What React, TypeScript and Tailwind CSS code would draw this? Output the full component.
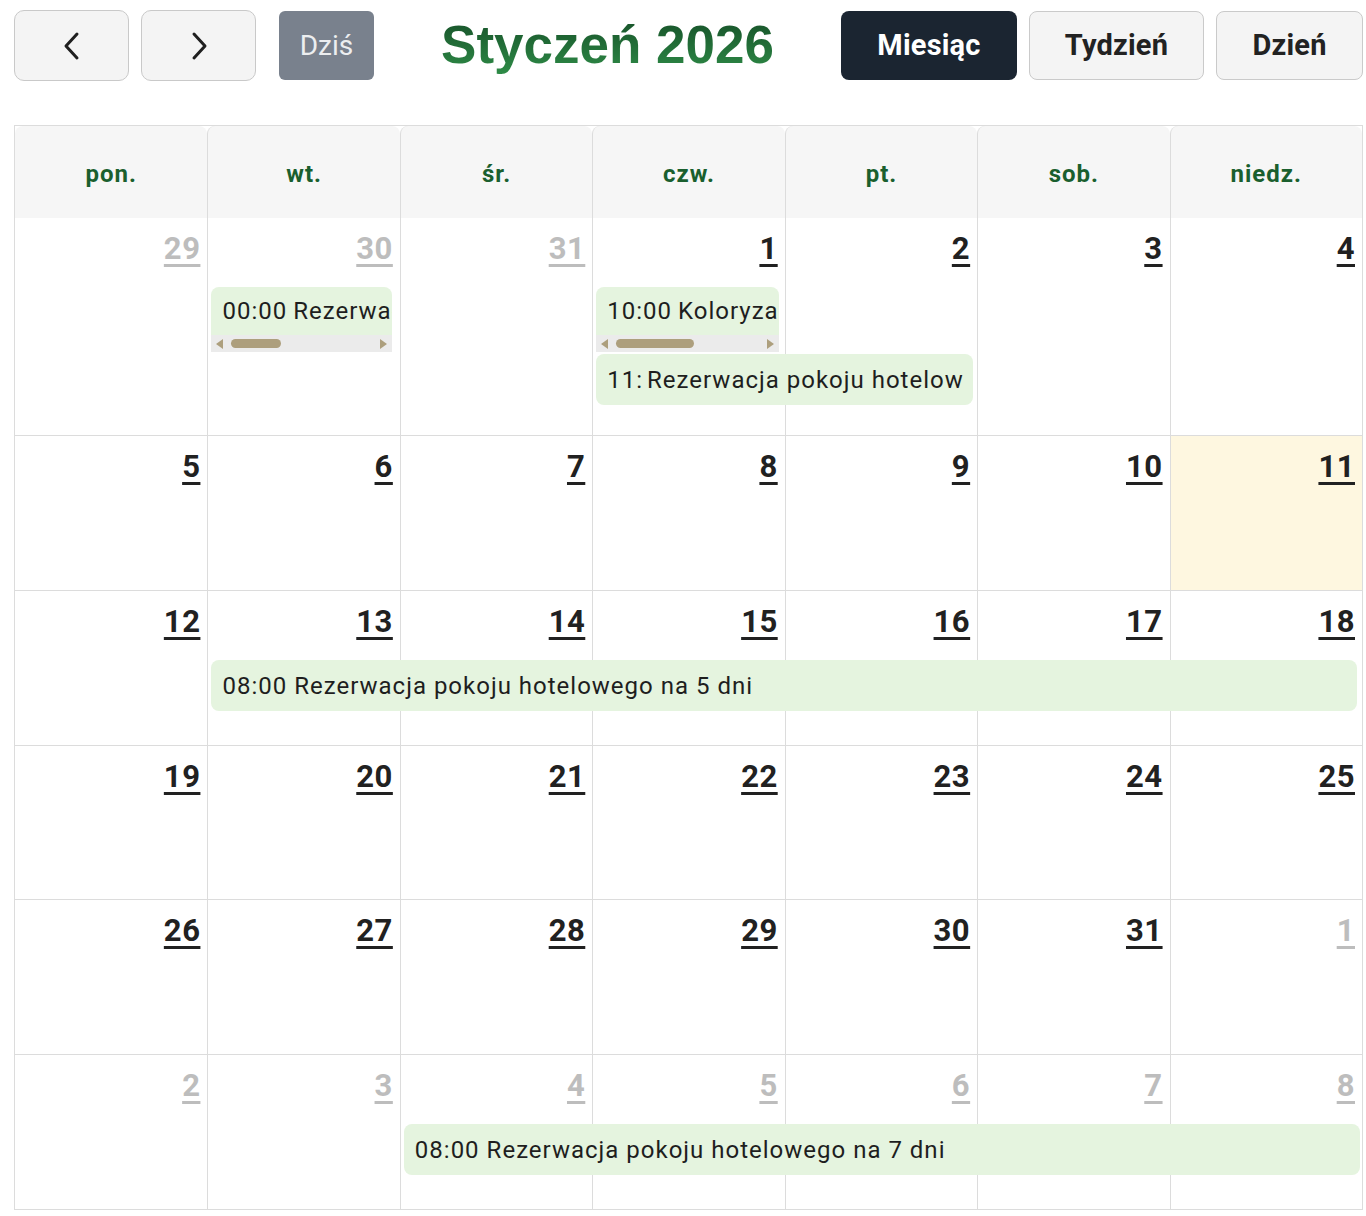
import React from 'react';

type Day = { n: number; muted?: boolean; today?: boolean };
type Ev = {
  col: number;
  span: number;
  row: number;
  time: string;
  title: string;
  mr: string;
  gap: string;
  scroll?: string;
};

const dayNames = ['pon.', 'wt.', 'śr.', 'czw.', 'pt.', 'sob.', 'niedz.'];

const weeks: { days: Day[]; events: Ev[]; h: string }[] = [
  {
    h: 'h-[218px]',
    days: [
      { n: 29, muted: true },
      { n: 30, muted: true },
      { n: 31, muted: true },
      { n: 1 },
      { n: 2 },
      { n: 3 },
      { n: 4 },
    ],
    events: [
      { col: 2, span: 1, row: 2, time: '00:00', title: 'Rezerwacja pokoju hotelowego', mr: 'mr-[8px]', gap: 'mr-[6px]', scroll: 'w-[50px]' },
      { col: 4, span: 1, row: 2, time: '10:00', title: 'Koloryzacja włosów', mr: 'mr-[6px]', gap: 'mr-[6px]', scroll: 'w-[78px]' },
      { col: 4, span: 2, row: 3, time: '11:', title: 'Rezerwacja pokoju hotelowego na 2 dni', mr: 'mr-[4px]', gap: 'mr-[4px]' },
    ],
  },
  {
    h: 'h-[155px]',
    days: [{ n: 5 }, { n: 6 }, { n: 7 }, { n: 8 }, { n: 9 }, { n: 10 }, { n: 11, today: true }],
    events: [],
  },
  {
    h: 'h-[155px]',
    days: [{ n: 12 }, { n: 13 }, { n: 14 }, { n: 15 }, { n: 16 }, { n: 17 }, { n: 18 }],
    events: [{ col: 2, span: 6, row: 2, time: '08:00', title: 'Rezerwacja pokoju hotelowego na 5 dni', mr: 'mr-[5px]', gap: 'mr-[7px]' }],
  },
  {
    h: 'h-[154px]',
    days: [{ n: 19 }, { n: 20 }, { n: 21 }, { n: 22 }, { n: 23 }, { n: 24 }, { n: 25 }],
    events: [],
  },
  {
    h: 'h-[155px]',
    days: [{ n: 26 }, { n: 27 }, { n: 28 }, { n: 29 }, { n: 30 }, { n: 31 }, { n: 1, muted: true }],
    events: [],
  },
  {
    h: 'h-[154px]',
    days: [
      { n: 2, muted: true },
      { n: 3, muted: true },
      { n: 4, muted: true },
      { n: 5, muted: true },
      { n: 6, muted: true },
      { n: 7, muted: true },
      { n: 8, muted: true },
    ],
    events: [{ col: 3, span: 5, row: 2, time: '08:00', title: 'Rezerwacja pokoju hotelowego na 7 dni', mr: 'mr-[2px]', gap: 'mr-[7px]' }],
  },
];

const colStart = ['', 'col-start-1', 'col-start-2', 'col-start-3', 'col-start-4', 'col-start-5', 'col-start-6', 'col-start-7'];
const colSpan = ['', 'col-span-1', 'col-span-2', 'col-span-3', 'col-span-4', 'col-span-5', 'col-span-6', 'col-span-7'];
const rowStart = ['', 'row-start-1', 'row-start-2', 'row-start-3'];

function Chevron({ dir }: { dir: 'left' | 'right' }) {
  return (
    <svg width="18" height="30" viewBox="0 0 18 30" fill="none">
      <path
        d={dir === 'left' ? 'M14 3 L3 15 L14 27' : 'M4 3 L15 15 L4 27'}
        stroke="#1f1f1f"
        strokeWidth="3"
        strokeLinecap="round"
        strokeLinejoin="round"
      />
    </svg>
  );
}

function FakeScrollbar({ thumb }: { thumb: string }) {
  return (
    <div className="flex h-[17px] items-center bg-[#ebebeb] px-[5px]">
      <span className="h-0 w-0 border-y-[5px] border-r-[7px] border-y-transparent border-r-[#ad9f7d]" />
      <span className={`ml-[8px] h-[9px] rounded-full bg-[#ad9f7d] ${thumb}`} />
      <span className="ml-auto h-0 w-0 border-y-[5px] border-l-[7px] border-y-transparent border-l-[#ad9f7d]" />
    </div>
  );
}

function Event({ ev }: { ev: Ev }) {
  return (
    <div
      className={`${colStart[ev.col]} ${colSpan[ev.span]} ${rowStart[ev.row]} ml-[4px] ${ev.mr} ${
        ev.row === 3 ? 'mt-[2px]' : ''
      } z-10 self-start overflow-hidden rounded-[8px] bg-[#e5f4df] ${ev.scroll ? 'rounded-b-none' : ''}`}
    >
      <div
        className={`flex items-center overflow-hidden whitespace-nowrap pl-[11px] text-[24px] tracking-[1px] text-[#1e1e1e] ${
          ev.scroll ? 'h-[48px]' : 'h-[51px] pr-[10px]'
        }`}
      >
        <span className={`shrink-0 ${ev.gap}`}>{ev.time}</span>
        <span className={ev.scroll ? 'shrink-0' : 'min-w-0 overflow-hidden'}>{ev.title}</span>
      </div>
      {ev.scroll && <FakeScrollbar thumb={ev.scroll} />}
    </div>
  );
}

export default function App() {
  return (
    <div className="min-h-[1216px] bg-white font-['Roboto','Liberation_Sans',sans-serif]">
      <div className="ml-[14px] w-[1349px] pt-[10px]">
        {/* toolbar */}
        <div className="flex h-[71px] items-center justify-between">
          <div className="flex items-center">
            <button className="flex h-[71px] w-[115px] items-center justify-center rounded-[10px] border border-[#c9c9c9] bg-[#f4f4f4]">
              <Chevron dir="left" />
            </button>
            <button className="ml-[12px] flex h-[71px] w-[115px] items-center justify-center rounded-[10px] border border-[#c9c9c9] bg-[#f4f4f4]">
              <Chevron dir="right" />
            </button>
            <button className="ml-[23px] flex h-[69px] w-[95px] items-center justify-center rounded-[6px] bg-[#79818d] text-[28px] text-[#eceef0]">
              Dziś
            </button>
          </div>
          <h2 className="-mt-[2px] bg-linear-to-b from-[#164f28] to-[#2f8d48] bg-clip-text font-['Liberation_Sans',Arial,sans-serif] text-[53px] font-bold leading-[60px] text-transparent">
            Styczeń 2026
          </h2>
          <div className="flex items-center gap-[12px]">
            <button className="h-[69px] w-[176px] rounded-[8px] bg-[#1b2531] text-[29px] font-bold tracking-[0.2px] text-white">
              Miesiąc
            </button>
            <button className="h-[69px] w-[175px] rounded-[8px] border border-[#cacaca] bg-[#f4f4f4] text-[29px] font-bold tracking-[0.2px] text-[#222]">
              Tydzień
            </button>
            <button className="h-[69px] w-[147px] rounded-[8px] border border-[#cacaca] bg-[#f4f4f4] text-[29px] font-bold tracking-[0.2px] text-[#222]">
              Dzień
            </button>
          </div>
        </div>

        {/* calendar grid */}
        <div className="mt-[44px] border border-[#dcdcdc]">
          <div className="grid h-[92px] grid-cols-7">
            {dayNames.map((d, i) => (
              <div
                key={d}
                className={`flex items-center justify-center rounded-t-[8px] bg-[#f6f6f6] pt-[3px] text-[24px] font-bold tracking-[1px] text-[#1a5f2e] ${
                  i > 0 ? 'border-l border-[#dcdcdc]' : ''
                }`}
              >
                {d}
              </div>
            ))}
          </div>

          {weeks.map((w, wi) => (
            <div
              key={wi}
              className={`grid grid-cols-7 grid-rows-[69px_auto_auto_1fr] ${w.h} ${
                wi < weeks.length - 1 ? 'border-b border-[#dcdcdc]' : ''
              }`}
            >
              {w.days.map((d, i) => (
                <div
                  key={i}
                  className={`${colStart[i + 1]} row-[1/5] flex justify-end pr-[7px] pt-[12px] ${
                    i > 0 ? 'border-l border-[#dcdcdc]' : ''
                  } ${d.today ? 'bg-[#fef7e0]' : ''}`}
                >
                  <span
                    className={`h-[38px] text-[31px] font-bold leading-[38px] tracking-[0.5px] underline decoration-[3px] underline-offset-[5px] ${
                      d.muted ? 'text-[#bdbdbd]' : 'text-[#212121]'
                    }`}
                  >
                    {d.n}
                  </span>
                </div>
              ))}
              {w.events.map((ev, ei) => (
                <Event key={ei} ev={ev} />
              ))}
            </div>
          ))}
        </div>
      </div>
    </div>
  );
}
